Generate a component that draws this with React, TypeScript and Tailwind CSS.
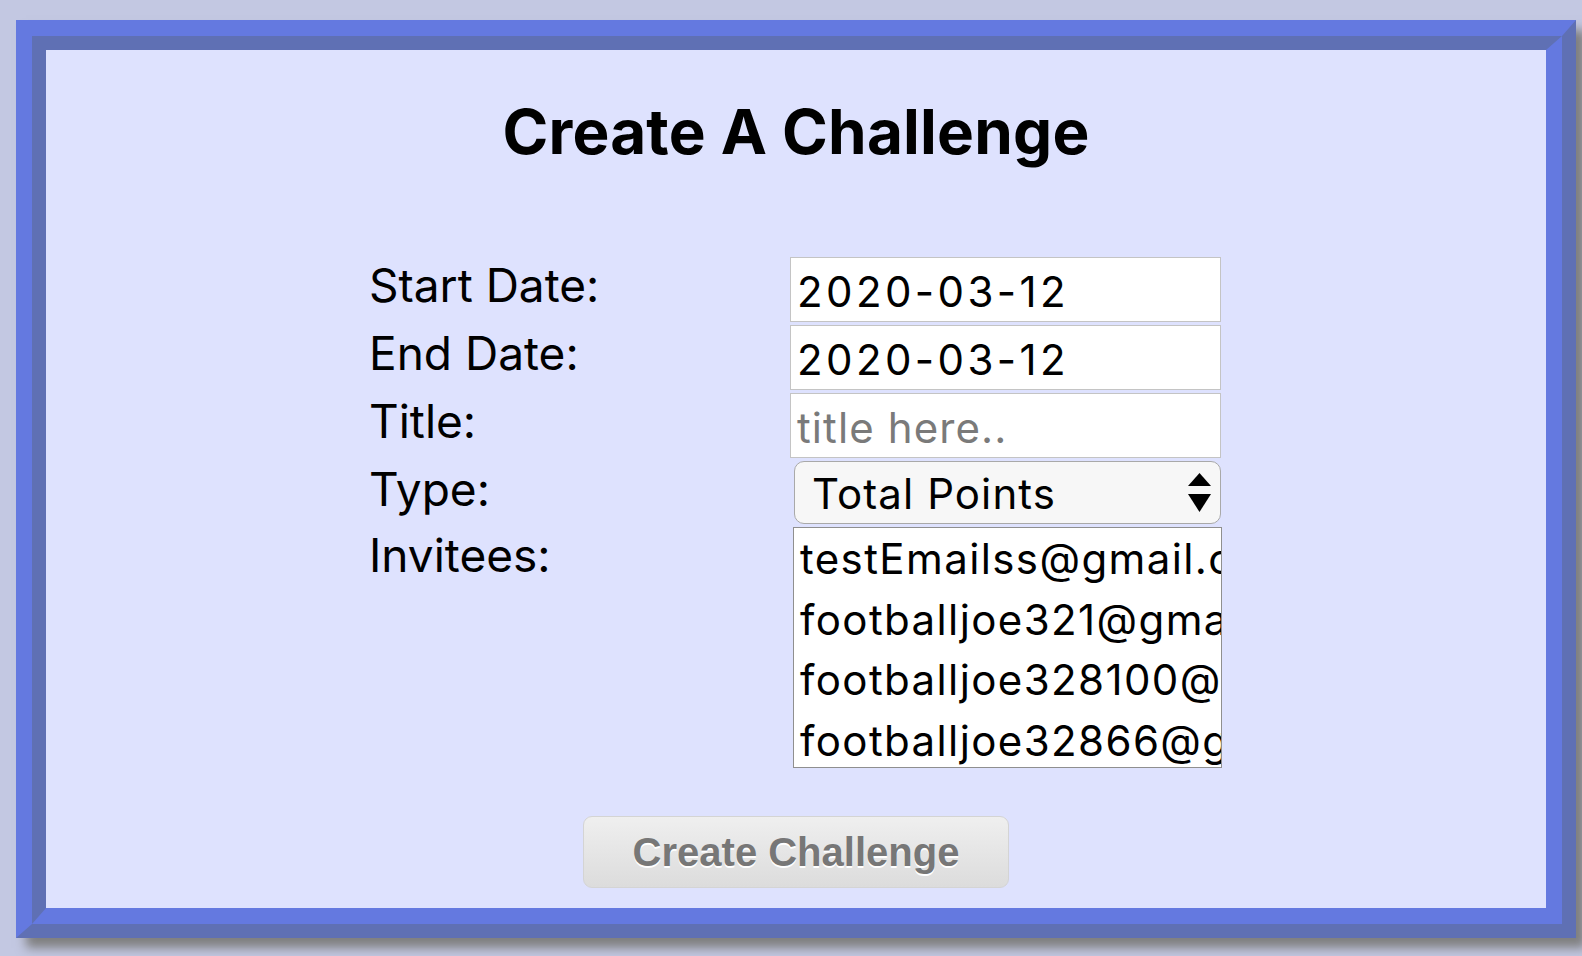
import React from "react";

const invitees = [
  "testEmailss@gmail.com",
  "footballjoe321@gmail.com",
  "footballjoe328100@gmail.com",
  "footballjoe32866@gmail.com",
];

export default function App() {
  return (
    <div className="w-[1582px] h-[956px] bg-[#c3c8e2] overflow-hidden pt-[20px] pl-[16px]" style={{ fontFamily: "Inter, 'Noto Sans', sans-serif" }}>
      <div className="w-[1560px] h-[918px] border-t-[16px] border-l-[16px] border-r-[14px] border-b-[14px] border-t-[#6479e0] border-l-[#6479e0] border-r-[#5f70b4] border-b-[#5f70b4] shadow-[10px_10px_10px_#7f7f7f]">
        <div className="w-full h-full border-t-[14px] border-l-[14px] border-r-[16px] border-b-[16px] border-t-[#5f70b4] border-l-[#5f70b4] border-r-[#6479e0] border-b-[#6479e0] bg-[#dee2fe] flex flex-col items-center">
          <h1 className="mt-[44px] mb-[3px] text-[62px] leading-[75px] font-bold text-black tracking-[0.2px]">Create A Challenge</h1>
          <div className="mt-[85px] grid grid-cols-[419px_431px] gap-y-[3px] text-black">
            <div className="text-[46px] leading-[56px] -ml-[2px]">Start Date:</div>
            <div className="h-[65px] bg-white border border-[#c4c4c4] pl-[6px] text-[42px] leading-[63px] pt-[2px] tracking-[3.4px]">2020-03-12</div>

            <div className="text-[46px] leading-[56px] -ml-[2px]">End Date:</div>
            <div className="h-[65px] bg-white border border-[#c4c4c4] pl-[6px] text-[42px] leading-[63px] pt-[2px] tracking-[3.4px]">2020-03-12</div>

            <div className="text-[46px] leading-[56px] -ml-[2px]">Title:</div>
            <div className="h-[65px] bg-white border border-[#c4c4c4] pl-[6px] text-[42px] leading-[63px] pt-[2px] tracking-[1.1px] text-[#7a7a7a]">title here..</div>

            <div className="text-[46px] leading-[56px] -ml-[2px]">Type:</div>
            <div className="h-[63px] ml-[4px] bg-[#f7f7f7] border border-[#a9a9a9] rounded-[10px] flex items-center justify-between pl-[17px] pr-[9px]">
              <span className="text-[42px] leading-[50px] pt-[2px] tracking-[1.1px]">Total Points</span>
              <svg width="23" height="40" viewBox="0 0 23 40">
                <polygon points="11.5,0 23,13 0,13" fill="#000" />
                <polygon points="0,21 23,21 11.5,39" fill="#000" />
              </svg>
            </div>

            <div className="text-[46px] leading-[56px] -ml-[2px]">Invitees:</div>
            <div className="h-[241px] ml-[3px] mr-[-1px] bg-white border-[1.5px] border-[#8f8f8f] overflow-hidden pl-[6px] pt-[1px]">
              {invitees.map((e) => (
                <div key={e} className="text-[42px] leading-[60.5px] whitespace-nowrap tracking-[1.4px]">{e}</div>
              ))}
            </div>
          </div>
          <button
            className="mt-[48px] w-[426px] h-[72px] rounded-[9px] border border-[#d4d4d4] bg-gradient-to-b from-[#efefef] to-[#dcdcdc] text-[40px] font-bold text-[#777777] [text-shadow:0_1.5px_0_#ffffff]"
            style={{ fontFamily: "'Liberation Sans', Arial, sans-serif" }}
          >
            Create Challenge
          </button>
        </div>
      </div>
    </div>
  );
}
